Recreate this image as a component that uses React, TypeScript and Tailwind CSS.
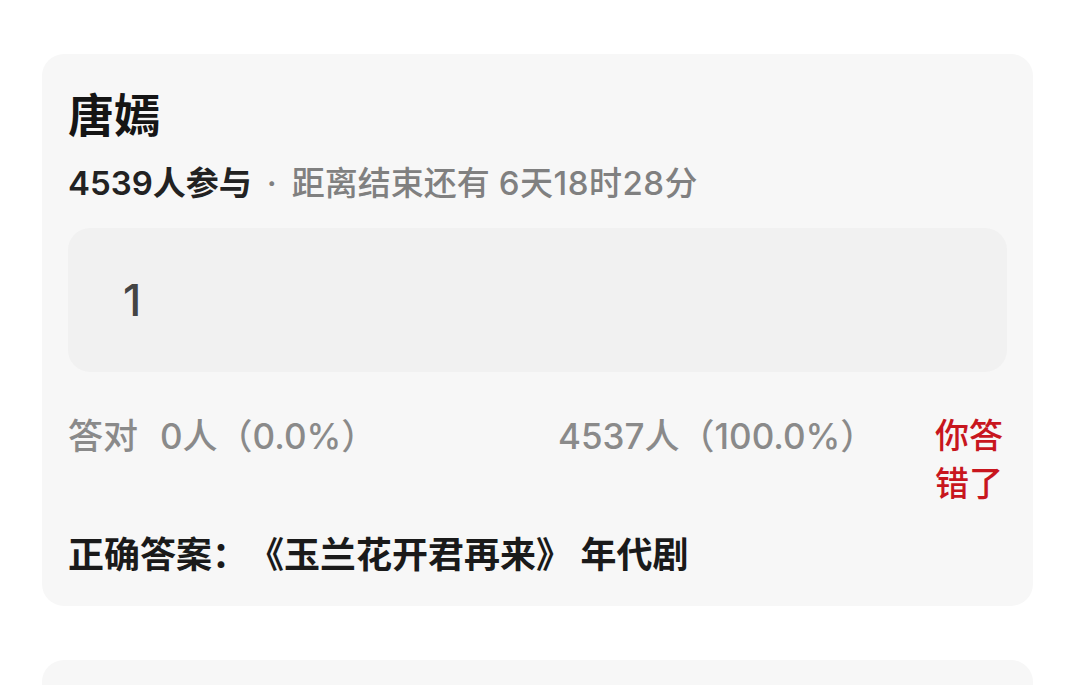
const fontStack = "font-['Inter','Noto_Sans_CJK_SC',sans-serif] [text-spacing-trim:space-all]";

export default function App() {
  return (
    <div className={`min-h-[685px] overflow-hidden bg-white ${fontStack}`}>
      <div className="h-[54px]" />

      <section className="ml-[42px] w-[991px] rounded-[22px] bg-[#f7f7f7] px-[26px] pb-[29px] pt-[33px]">
        <h1 className="text-[46px] font-bold leading-[56px] text-[#151515]">唐嫣</h1>

        <p className="mt-[20px] text-[33px] leading-[40px] text-[#808080]">
          <span className="font-semibold text-[#222]">4539人参与</span>
          <span className="mx-[15px] font-medium">·</span>
          <span className="font-medium">
            距离结束还有 <span className="tracking-[0.5px]">6天18时28分</span>
          </span>
        </p>

        <div className="mt-[25px] flex h-[144px] items-center rounded-[22px] bg-[#f1f1f1] pl-[55px]">
          <span className="text-[44px] font-medium text-[#444]">1</span>
        </div>

        <div className="mt-[40px] grid grid-cols-[490px_1fr_auto] text-[35px] leading-[48px] text-[#8a8a8a]">
          <p className="font-medium">
            答对<span className="ml-[22px]">0人（0.0%）</span>
          </p>
          <p className="font-medium">4537人（100.0%）</p>
          <p className="w-[72px] text-[34px] font-medium text-[#c8161e]">你答错了</p>
        </div>

        <p className="mt-[25px] text-[36px] font-bold leading-[44px] text-[#1a1a1a]">
          正确答案：《玉兰花开君再来》 年代剧
        </p>
      </section>

      <div className="ml-[42px] mt-[54px] h-[40px] w-[991px] rounded-t-[22px] bg-[#f7f7f7]" />
    </div>
  );
}
